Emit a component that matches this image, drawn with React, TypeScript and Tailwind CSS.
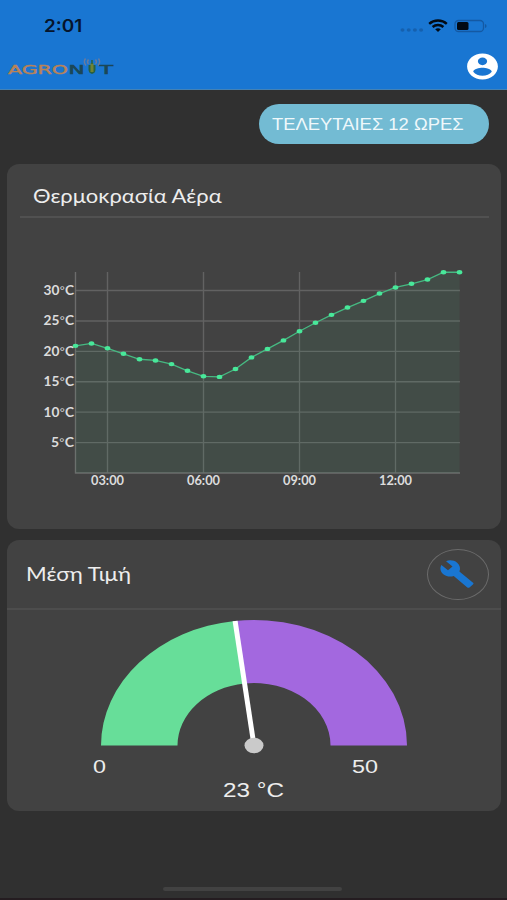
const READINGS = [
  20.9, 21.3, 20.5, 19.6, 18.7, 18.5, 17.9, 16.8, 15.9, 15.8, 17.1, 19, 20.4,
  21.8, 23.3, 24.7, 26, 27.2, 28.3, 29.5, 30.5, 31.1, 31.8, 33, 33,
];

const Y_TICKS = [30, 25, 20, 15, 10, 5];

const X_TICKS = [
  { index: 2, label: "03:00" },
  { index: 8, label: "06:00" },
  { index: 14, label: "09:00" },
  { index: 20, label: "12:00" },
];

// plot area
const LEFT = 68.5;
const RIGHT = 453;
const TOP = 54;
const BOTTOM = 255;

const xAt = (index: number) => LEFT + index * 16;
const yAt = (value: number) => BOTTOM - value * 6.083;

function StatusBar() {
  return (
    <div className="flex h-[46px] items-start justify-between pl-11 pr-5 pt-4">
      <span className="inline-block origin-left scale-x-[1.11] font-['Inter'] text-[17px] font-semibold leading-5 text-[#06142b]">
        2:01
      </span>
      <div className="flex items-center pt-[3px]">
        <svg width="24" height="14" viewBox="0 0 24 14">
          {[2.5, 8.7, 14.9, 21.1].map((cx) => (
            <ellipse key={cx} cx={cx} cy="11" rx="2" ry="1.7" fill="#1560ae" />
          ))}
        </svg>
        <svg
          className="ml-1"
          width="20"
          height="14"
          viewBox="0 0 20 14"
          fill="none"
          stroke="#020a14"
          strokeWidth="2.4"
        >
          <path d="M1.2 4.8C6 .4 14 .4 18.8 4.8" />
          <path d="M4.6 8C7.7 5.3 12.3 5.3 15.4 8" />
          <path d="M7.2 10.3c1.7-1.3 3.9-1.3 5.6 0L10 12.9z" fill="#020a14" stroke="none" />
        </svg>
        <svg className="ml-1.5" width="33" height="14" viewBox="0 0 33 14">
          <rect x="1" y="1.5" width="28.5" height="11" rx="3.5" fill="none" stroke="#1459a3" strokeWidth="1.3" />
          <rect x="3" y="3" width="11.5" height="8" rx="1.5" fill="#020a14" />
          <path d="M31 5v4q1.6-.6 1.6-2T31 5z" fill="#1459a3" />
        </svg>
      </div>
    </div>
  );
}

function Logo() {
  return (
    <svg width="108" height="20" viewBox="0 0 108 20" className="font-['DejaVu_Sans'] text-[12px]">
      <text x="1" y="17" textLength="60" lengthAdjust="spacingAndGlyphs" fill="#b98358" stroke="#b98358" strokeWidth=".4">
        AGRO
      </text>
      <text x="61.5" y="17" textLength="16" lengthAdjust="spacingAndGlyphs" fill="#1b4757" stroke="#1b4757" strokeWidth=".6">
        N
      </text>
      <text x="92.5" y="17" textLength="13.5" lengthAdjust="spacingAndGlyphs" fill="#1b4757" stroke="#1b4757" strokeWidth=".6">
        T
      </text>
      <path d="M81.5 8h7v4.5q0 3.5-3.5 4.5q-3.5-1-3.5-4.5z" fill="#286040" />
      <path d="M83.5 6h3v9h-3z" fill="#708334" />
      <path d="M85 7V3" stroke="#286040" strokeWidth="1.5" />
      <path
        d="M81.5 7q-2-2 0-4.5M79 8.5q-3-3.5-.5-7M88.5 7q2-2 0-4.5M91 8.5q3-3.5.5-7"
        fill="none"
        stroke="#6b7b9c"
        strokeWidth="1.4"
      />
    </svg>
  );
}

function AccountIcon() {
  return (
    <svg width="37" height="31" viewBox="0 0 24 24" preserveAspectRatio="none" fill="#ffffff">
      <path d="M12 2C6.48 2 2 6.48 2 12s4.48 10 10 10 10-4.48 10-10S17.52 2 12 2zm0 3c1.66 0 3 1.34 3 3s-1.34 3-3 3-3-1.34-3-3 1.34-3 3-3zm0 14.2c-2.5 0-4.71-1.28-6-3.22.03-1.99 4-3.08 6-3.08 1.99 0 5.97 1.09 6 3.08-1.29 1.94-3.5 3.22-6 3.22z" />
    </svg>
  );
}

function WrenchIcon() {
  return (
    <svg width="36" height="30" viewBox="0 0 24 24" preserveAspectRatio="none" fill="#1976d2">
      <path d="M22.7 19l-9.1-9.1c.9-2.3.4-5-1.5-6.9-2-2-5-2.4-7.4-1.3L9 6 6 9 1.6 4.7C.4 7.1.9 10.1 2.9 12.1c1.9 1.9 4.6 2.4 6.9 1.5l9.1 9.1c.4.4 1 .4 1.4 0l2.3-2.3c.5-.4.5-1.1.1-1.400z" />
    </svg>
  );
}

function TemperatureChart() {
  const line = READINGS.map((value, i) => `${xAt(i)},${yAt(value)}`).join(" ");

  return (
    <svg width="494" height="311" viewBox="0 0 494 311" className="block font-['Lato'] text-[12.5px] font-bold">
      <g stroke="#626262" strokeWidth="1.4">
        {Y_TICKS.map((tick) => (
          <line key={tick} x1={LEFT} x2={RIGHT} y1={yAt(tick)} y2={yAt(tick)} />
        ))}
        {X_TICKS.map(({ index }) => (
          <line key={index} x1={xAt(index)} x2={xAt(index)} y1={TOP} y2={BOTTOM} />
        ))}
        <path d={`M${LEFT} ${TOP}V${BOTTOM}H${RIGHT}`} fill="none" stroke="#6c6c6c" />
      </g>
      <polygon
        points={`${LEFT},${BOTTOM} ${line} ${xAt(24)},${BOTTOM}`}
        fill="#48e89a"
        fillOpacity=".06"
      />
      <g fill="#dcdcdc">
        {Y_TICKS.map((tick) => (
          <text
            key={tick}
            x="67"
            y={yAt(tick) + 4.5}
            textAnchor="end"
            textLength={tick < 10 ? 23 : 30.5}
            lengthAdjust="spacingAndGlyphs"
          >
            {tick}
            <tspan className="font-['Liberation_Sans'] font-normal">°</tspan>C
          </text>
        ))}
        {X_TICKS.map(({ index, label }) => (
          <text
            key={label}
            x={xAt(index)}
            y="266.5"
            textAnchor="middle"
            textLength="33"
            lengthAdjust="spacingAndGlyphs"
          >
            {label}
          </text>
        ))}
      </g>
      <polyline points={line} fill="none" stroke="#46b982" strokeWidth="1.3" />
      {READINGS.map((value, i) => (
        <ellipse key={i} cx={xAt(i)} cy={yAt(value)} rx="2.8" ry="2.2" fill="#48e89a" />
      ))}
    </svg>
  );
}

function Gauge() {
  return (
    <svg
      width="494"
      height="201"
      viewBox="0 0 494 201"
      className="block font-['Liberation_Sans'] text-[19px]"
      fill="#ededed"
    >
      <path d="M94 135.5A153 125.5 0 0 1 227.8 11L237.4 73.5A76.5 62.5 0 0 0 170.5 135.5Z" fill="#67de99" />
      <path d="M227.8 11A153 125.5 0 0 1 400 135.5H323.5A76.5 62.5 0 0 0 237.4 73.5Z" fill="#a368df" />
      <path d="M225.6 11.3L230.6 10.7L249.5 135.5H244.5Z" fill="#ffffff" />
      <ellipse cx="247" cy="135.5" rx="9.5" ry="7.8" fill="#cacaca" />
      <text x="86" y="163" textLength="13" lengthAdjust="spacingAndGlyphs">
        0
      </text>
      <text x="345" y="163" textLength="26" lengthAdjust="spacingAndGlyphs">
        50
      </text>
      <text x="216" y="187" textLength="61" lengthAdjust="spacingAndGlyphs" className="text-[20px]">
        23 °C
      </text>
    </svg>
  );
}

export default function App() {
  return (
    <div className="flex h-[900px] w-[507px] flex-col overflow-hidden border-b-2 border-[#241c20] bg-[#303030] text-[#ededed]">
      <header className="h-[90px] shrink-0 border-b border-[#4482b5] bg-[#1976d2]">
        <StatusBar />
        <div className="flex items-center justify-between pl-[7px] pr-1.5 pt-[5px]">
          <Logo />
          <AccountIcon />
        </div>
      </header>

      <div className="mr-[18px] mt-3.5 flex h-10 w-[230px] shrink-0 items-center self-end rounded-full bg-[#73bbd3] pl-[13px] pt-0.5">
        <span className="inline-block origin-left scale-x-[1.15] whitespace-nowrap font-['Liberation_Sans'] text-base text-[#eff8fb]">
          ΤΕΛΕΥΤΑΙΕΣ 12 ΩΡΕΣ
        </span>
      </div>

      <section className="mx-[7px] mt-5 h-[365px] w-[494px] shrink-0 rounded-xl bg-[#424242]">
        <div className="mx-[13px] flex h-[54px] w-[469px] items-center border-b-2 border-[#515151] pl-[13px] pt-3">
          <h2 className="origin-left scale-x-[1.157] whitespace-nowrap font-['Lato'] text-[19px]">
            Θερμοκρασία Αέρα
          </h2>
        </div>
        <TemperatureChart />
      </section>

      <section className="mx-[7px] mt-[11px] h-[271px] w-[494px] shrink-0 rounded-xl bg-[#424242]">
        <div className="flex h-[70px] items-center justify-between border-b-2 border-[#4d4d4d] pl-[19px] pr-3">
          <h2 className="origin-left scale-x-[1.175] whitespace-nowrap font-['Lato'] text-[19px]">
            Μέση Τιμή
          </h2>
          <button className="flex h-[51px] w-[62px] items-center justify-center rounded-[50%] border border-[#6b6b6b] pr-0.5">
            <WrenchIcon />
          </button>
        </div>
        <Gauge />
      </section>

      <div className="mb-[7px] ml-[163px] mt-auto h-1 w-[179px] rounded-full bg-[#424242]" />
    </div>
  );
}
